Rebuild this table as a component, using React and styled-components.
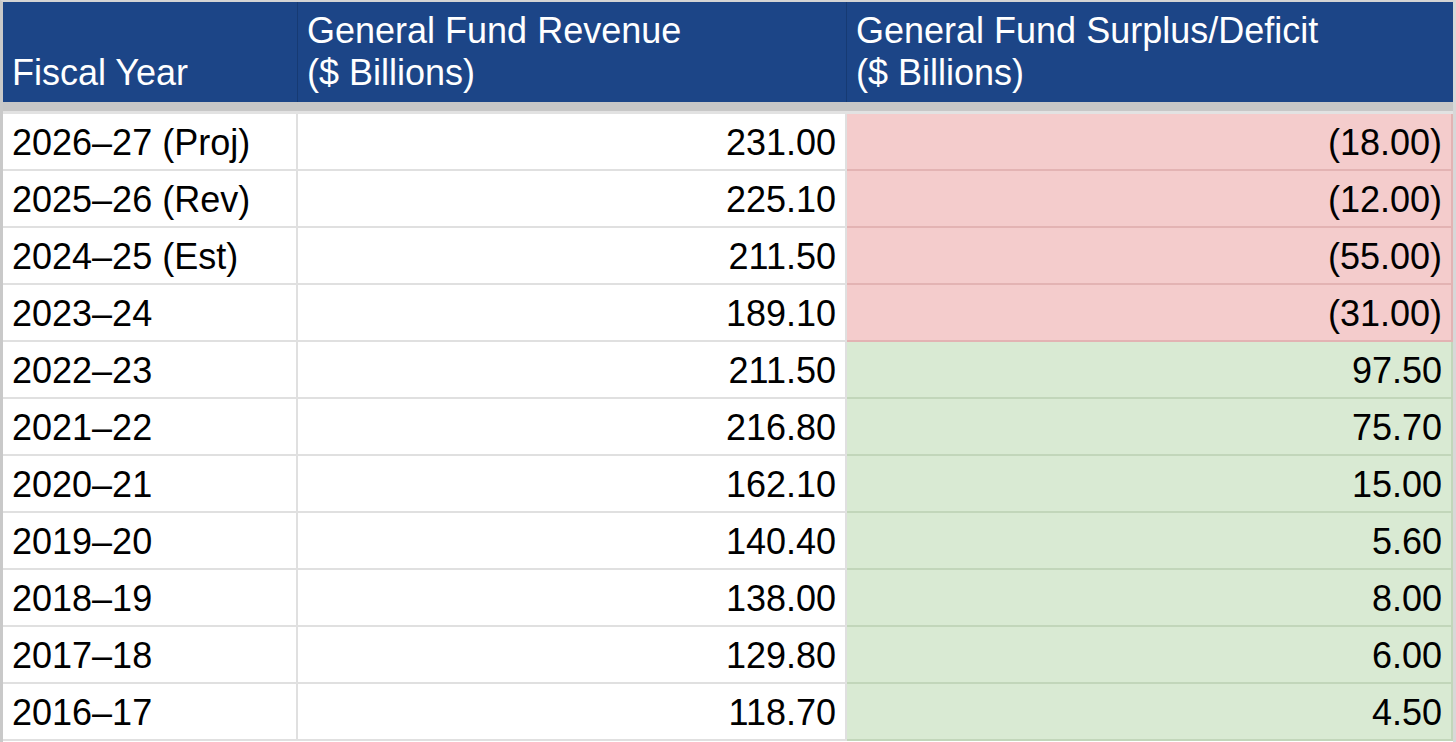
import React from "react";
import styled, { createGlobalStyle } from "styled-components";

const Global = createGlobalStyle`
  html, body { margin: 0; padding: 0; background: #ffffff; }
  body { font-family: "Liberation Sans", Arial, sans-serif; overflow: hidden; }
`;

const Frame = styled.div`
  width: 1456px;
  height: 742px;
  box-sizing: border-box;
  border-top: 2px solid #d4d4d4;
  border-left: 3px solid #c9c9c9;
  border-right: 3px solid #d8d8d8;
  background: #ffffff;
`;

const Grid = styled.div`
  display: grid;
  grid-template-columns: 295px 549px 606px;
`;

const HeadCell = styled.div`
  box-sizing: border-box;
  height: 100px;
  background: #1c4587;
  color: #ffffff;
  font-size: 36px;
  line-height: 42px;
  padding: 0 10px 8px 9px;
  display: flex;
  flex-direction: column;
  justify-content: flex-end;
  border-right: 1px solid ${(p) => (p.$last ? "#1c4587" : "#163a73")};
  white-space: nowrap;
`;

const Band = styled.div`
  grid-column: 1 / -1;
  height: 9px;
  background: #c7c7c7;
  border-bottom: 3px solid #e2e2e2;
`;

const tones = {
  plain: { bg: "#ffffff", line: "#e0e0e0" },
  neg: { bg: "#f4cccc", line: "#e3b3b3" },
  pos: { bg: "#d9ead3", line: "#c2d6ba" },
};

const Cell = styled.div`
  box-sizing: border-box;
  height: 57px;
  background: ${(p) => tones[p.$tone].bg};
  border-right: 2px solid ${(p) => tones[p.$tone].line};
  border-bottom: 2px solid ${(p) => tones[p.$tone].line};
  color: #000000;
  font-size: 36px;
  display: flex;
  align-items: center;
  justify-content: ${(p) => (p.$num ? "flex-end" : "flex-start")};
  padding: 2px ${(p) => (p.$num ? "9px" : "9px")} 0 9px;
  white-space: nowrap;
`;

const rows = [
  ["2026–27 (Proj)", "231.00", "(18.00)"],
  ["2025–26 (Rev)", "225.10", "(12.00)"],
  ["2024–25 (Est)", "211.50", "(55.00)"],
  ["2023–24", "189.10", "(31.00)"],
  ["2022–23", "211.50", "97.50"],
  ["2021–22", "216.80", "75.70"],
  ["2020–21", "162.10", "15.00"],
  ["2019–20", "140.40", "5.60"],
  ["2018–19", "138.00", "8.00"],
  ["2017–18", "129.80", "6.00"],
  ["2016–17", "118.70", "4.50"],
];

export default function App() {
  return (
    <>
      <Global />
      <Frame>
        <Grid>
          <HeadCell>
            <span>Fiscal Year</span>
          </HeadCell>
          <HeadCell>
            <span>General Fund Revenue</span>
            <span>($ Billions)</span>
          </HeadCell>
          <HeadCell $last>
            <span>General Fund Surplus/Deficit</span>
            <span>($ Billions)</span>
          </HeadCell>
          <Band />
          {rows.map(([year, rev, bal]) => {
            const tone = bal.startsWith("(") ? "neg" : "pos";
            return (
              <React.Fragment key={year}>
                <Cell $tone="plain">{year}</Cell>
                <Cell $tone="plain" $num>
                  {rev}
                </Cell>
                <Cell $tone={tone} $num>
                  {bal}
                </Cell>
              </React.Fragment>
            );
          })}
        </Grid>
      </Frame>
    </>
  );
}
